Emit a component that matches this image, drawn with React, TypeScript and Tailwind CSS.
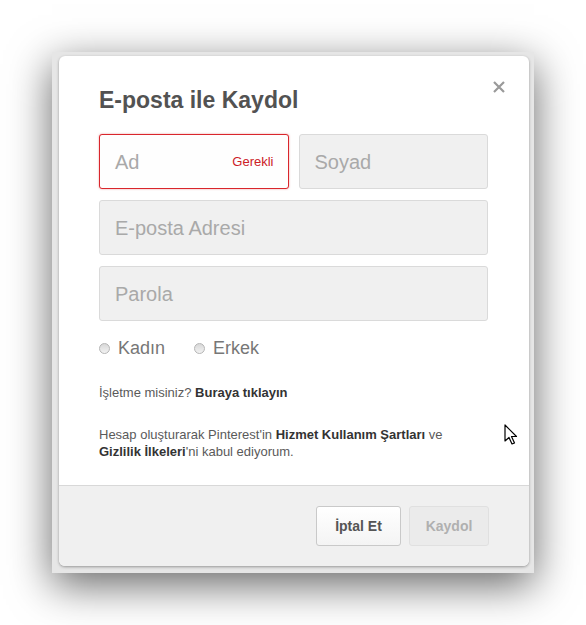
import React from "react";

const Radio: React.FC<{ label: string }> = ({ label }) => (
  <label className="flex items-center gap-[8px]">
    <span className="w-[11px] h-[11px] rounded-full border border-[#b5b5b5] bg-gradient-to-b from-[#d8d8d8] to-[#f2f2f2]" />
    <span className="text-[18px] leading-[20px] text-[#777]">{label}</span>
  </label>
);

const App: React.FC = () => {
  return (
    <div className="w-[586px] h-[625px] bg-white pl-[52px] pt-[52px] font-['Liberation_Sans',Arial,sans-serif] relative">
      {/* lightbox frame */}
      <div className="w-[482px] h-[521px] bg-[#e6e6e6] pl-[7px] pt-[4px] shadow-[0_12px_40px_rgba(0,0,0,0.6)]">
        <div className="relative w-[470px] h-[510px] bg-white rounded-[6px] flex flex-col overflow-hidden shadow-[0_1px_3px_rgba(0,0,0,0.35)]">
          <button className="absolute right-[24px] top-[25px] w-[12px] h-[12px]">
            <svg viewBox="0 0 12 12" className="w-[12px] h-[12px]">
              <path d="M1 1L11 11M11 1L1 11" stroke="#9a9a9a" strokeWidth="2.2" />
            </svg>
          </button>

          <div className="flex-1 pl-[40px] pr-[41px] pt-[33px]">
            <h1 className="text-[23px] leading-none font-bold text-[#525252]">E-posta ile Kaydol</h1>

            <div className="mt-[22px] grid grid-cols-2 gap-x-[10px] gap-y-[11px]">
              <div className="h-[55px] rounded-[3px] border border-[#d9262c] bg-[#fefefe] shadow-[0_0_2px_rgba(217,38,44,0.5)] flex items-center justify-between pl-[15px] pr-[14px]">
                <span className="text-[20px] text-[#a9a9a9]">Ad</span>
                <span className="text-[13px] text-[#cc2127]">Gerekli</span>
              </div>
              <div className="h-[55px] rounded-[3px] border border-[#dadada] bg-[#f0f0f0] flex items-center pl-[15px]">
                <span className="text-[20px] text-[#a9a9a9]">Soyad</span>
              </div>
              <div className="col-span-2 h-[55px] rounded-[3px] border border-[#dadada] bg-[#f0f0f0] flex items-center pl-[15px]">
                <span className="text-[20px] text-[#a9a9a9]">E-posta Adresi</span>
              </div>
              <div className="col-span-2 h-[55px] rounded-[3px] border border-[#dadada] bg-[#f0f0f0] flex items-center pl-[15px]">
                <span className="text-[20px] text-[#a9a9a9]">Parola</span>
              </div>
            </div>

            <div className="mt-[17px] flex gap-[29px]">
              <Radio label="Kadın" />
              <Radio label="Erkek" />
            </div>

            <p className="mt-[26px] text-[13px] leading-[17px] text-[#5a5a5a]">
              İşletme misiniz? <b className="text-[#333]">Buraya tıklayın</b>
            </p>

            <p className="mt-[25px] text-[13px] leading-[17px] text-[#5a5a5a]">
              Hesap oluşturarak Pinterest'in <b className="text-[#333]">Hizmet Kullanım Şartları</b> ve{" "}
              <b className="text-[#333]">Gizlilik İlkeleri</b>'ni kabul ediyorum.
            </p>
          </div>

          <div className="h-[81px] border-t border-[#d8d8d8] bg-[#f0f0f0] flex justify-end items-center gap-[8px] pr-[40px]">
            <button className="w-[85px] h-[40px] rounded-[3px] border border-[#c9c9c9] bg-gradient-to-b from-white to-[#f4f4f4] text-[14px] font-bold text-[#555]">
              İptal Et
            </button>
            <button className="w-[80px] h-[40px] rounded-[3px] border border-[#e0e0e0] bg-[#ebebeb] text-[14px] font-bold text-[#b0b0b0]">
              Kaydol
            </button>
          </div>
        </div>
      </div>

      {/* mouse pointer */}
      <svg className="absolute left-[504px] top-[424px]" width="14" height="22" viewBox="0 0 14 22">
        <path d="M1 1L1 17L5 13.5L8 20L10.5 19L7.5 12.5L12.5 12.5Z" fill="white" stroke="black" strokeWidth="1.2" strokeLinejoin="round" />
      </svg>
    </div>
  );
};

export default App;
